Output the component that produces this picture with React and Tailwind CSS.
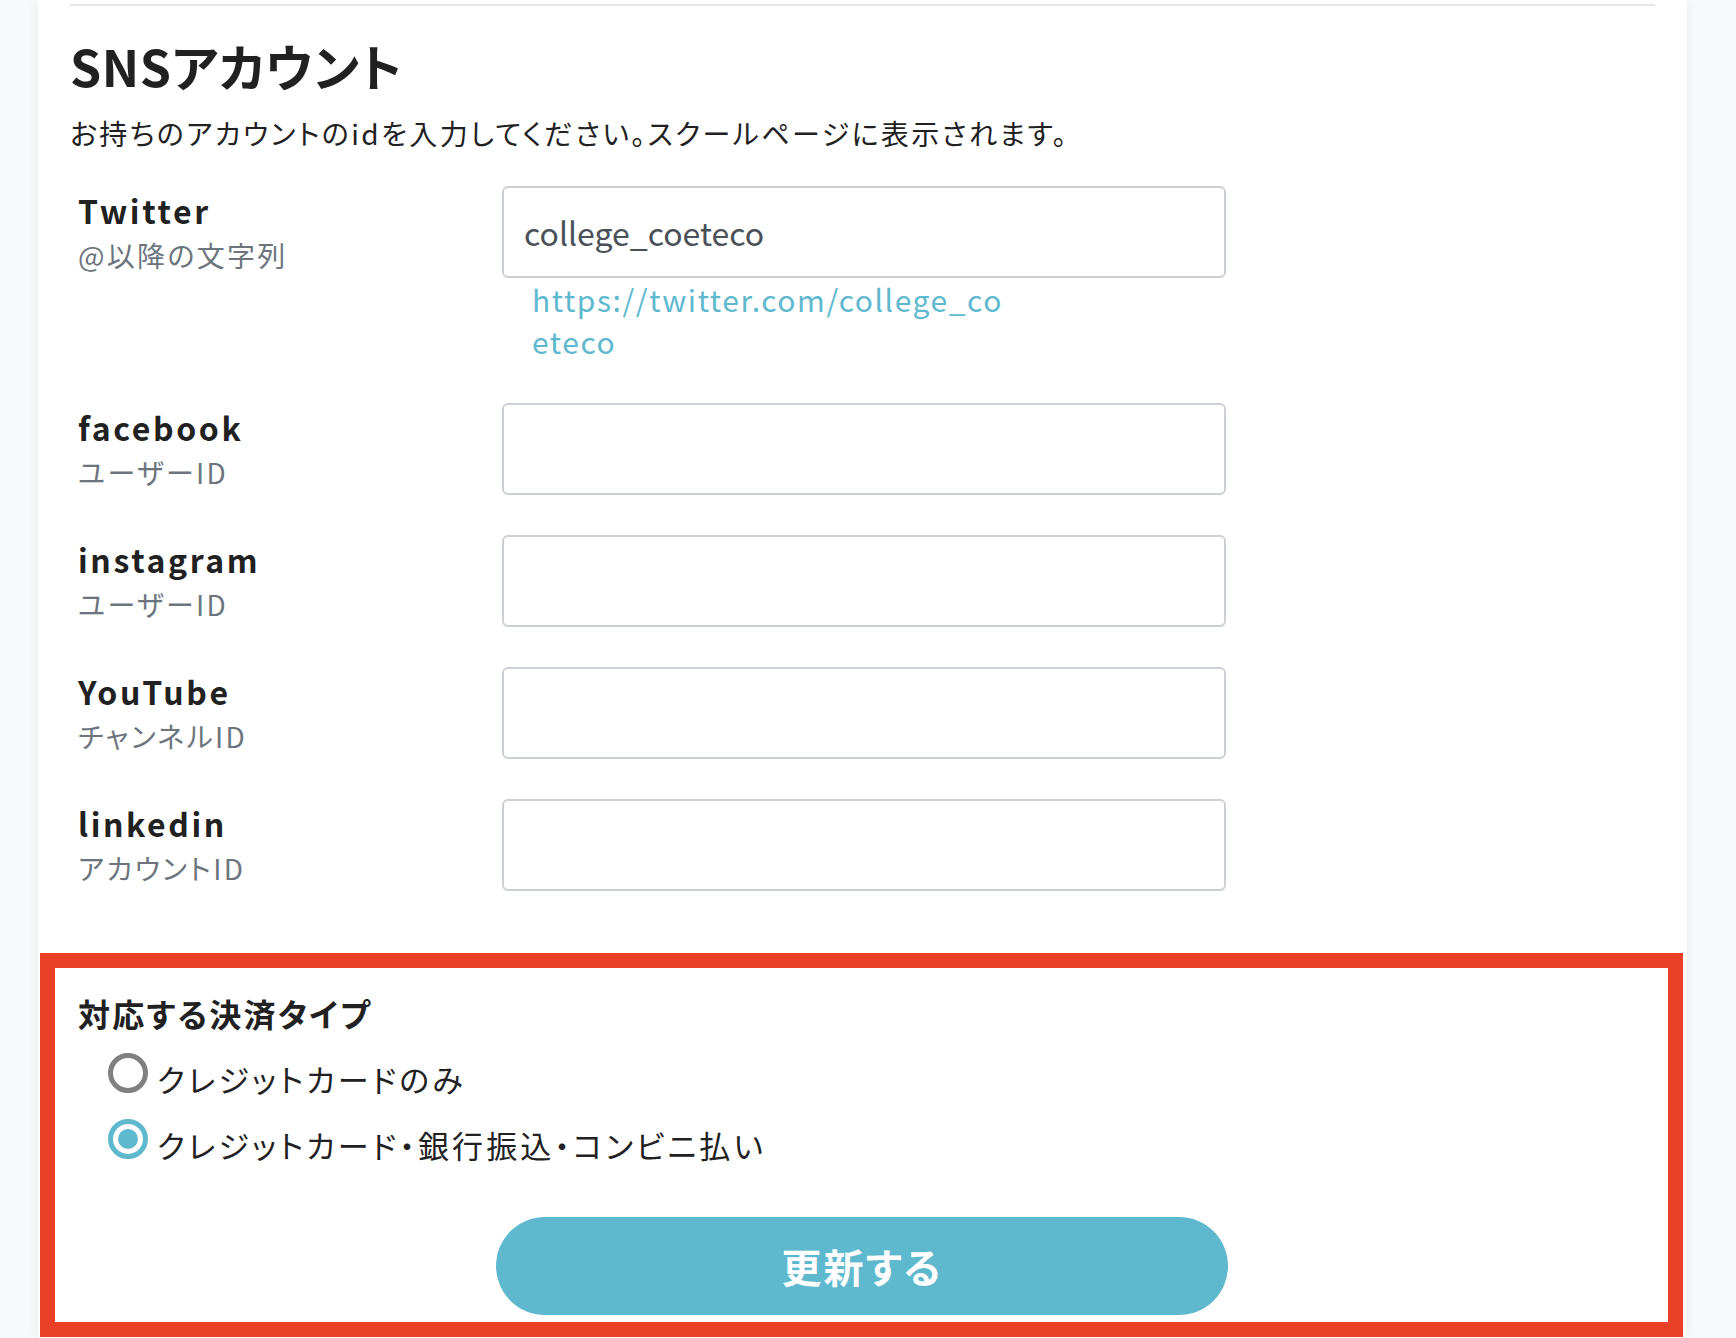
const font = { fontFamily: '"Noto Sans CJK JP", "Noto Sans", sans-serif' };

const rows = [
  { id: 1, name: "Twitter", hint: "@以降の文字列", value: "college_coeteco", link: true },
  { id: 2, name: "facebook", hint: "ユーザーID" },
  { id: 3, name: "instagram", hint: "ユーザーID" },
  { id: 4, name: "YouTube", hint: "チャンネルID" },
  { id: 5, name: "linkedin", hint: "アカウントID" },
];

const App = () => {
  return (
    <div className="h-[1338px] overflow-hidden bg-[#f8f9fb] [font-feature-settings:'palt']" style={font}>
      <div className="mx-[38px] h-full w-[1649px] bg-white shadow-[0_0_12px_rgba(0,0,0,0.06)]">
        <div className="ml-[32px] mr-[32px] pt-[4px]">
          <div className="h-[2px] bg-[#e4e6e8]" />
          <h2 className="mt-[23px] text-[50px] font-bold leading-[72px] tracking-[0.6px] text-[#212121]">SNSアカウント</h2>
          <p className="mt-[12px] text-[28px] leading-[40px] tracking-[2.4px] text-[#212121]">
            お持ちのアカウントのidを入力してください。スクールページに表示されます。
          </p>

          {/* sns form */}
          <div className="mt-[33px] flex flex-col gap-[40px]">
            {rows.map((row) => (
              <div key={row.id} className="flex">
                <div className="w-[432px] shrink-0 pl-[8px]">
                  <div className="text-[32px] font-bold leading-[48px] tracking-[2.6px] text-[#212121]">{row.name}</div>
                  <div className="text-[28px] leading-[42px] tracking-[2.3px] text-[#6c757d]">{row.hint}</div>
                </div>
                <div className="w-[724px]">
                  <input
                    className="block h-[92px] w-full rounded-[6px] border-2 border-[#ccd0d4] bg-white px-[20px] text-[32px] text-[#495057] outline-none"
                    defaultValue={row.value}
                    readOnly
                  />
                  {row.link && (
                    <div className="mb-[1px] w-[505px] break-all pl-[30px] text-[30px] leading-[42px] tracking-[1.55px] text-[#5eb8ce]">
                      https://twitter.com/college_coeteco
                    </div>
                  )}
                </div>
              </div>
            ))}
          </div>
        </div>

        {/* payment type */}
        <div className="ml-[2px] mt-[62px] h-[384px] w-[1643px] border-[15px] border-[#ea4027]">
          <div className="pl-[23px] pt-[23px]">
            <div className="text-[32px] font-bold leading-[44px] tracking-[2.25px] text-[#212121]">対応する決済タイプ</div>
            <div className="mt-[18px] flex flex-col gap-[20px] pl-[30px]">
              <label className="flex items-start gap-[9px]">
                <span className="h-[40px] w-[40px] rounded-full border-[5px] border-[#808080] bg-white" />
                <span className="mt-[6px] text-[31px] leading-[40px] tracking-[3.1px] text-[#212121]">クレジットカードのみ</span>
              </label>
              <label className="flex items-start gap-[9px]">
                <span className="flex h-[40px] w-[40px] items-center justify-center rounded-full border-[5px] border-[#5eb8ce] bg-white">
                  <span className="h-[20px] w-[20px] rounded-full bg-[#5eb8ce]" />
                </span>
                <span className="mt-[6px] text-[31px] leading-[40px] tracking-[3.1px] text-[#212121]">クレジットカード・銀行振込・コンビニ払い</span>
              </label>
            </div>
            <button className="ml-[418px] mt-[52px] block h-[98px] w-[732px] rounded-full bg-[#5eb8ce] text-[40px] font-bold tracking-[2px] text-white">
              更新する
            </button>
          </div>
        </div>
      </div>
    </div>
  );
};

export default App;
